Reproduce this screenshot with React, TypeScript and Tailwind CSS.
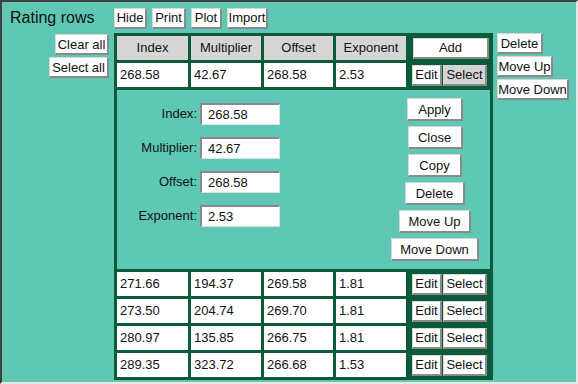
import React from 'react';

const font = { fontFamily: '"Liberation Sans", Arial, sans-serif' };

function Btn({ label, w, h = 'h-[21px]', selected = false }: { label: string; w: string; h?: string; selected?: boolean }) {
  return (
    <button
      className={`${w} ${h} ${selected ? 'bg-[#d4d4d4]' : 'bg-white'} flex items-center justify-center text-[13px] leading-none text-[#111] border-t border-l border-r-2 border-b-2 border-t-[#d6d6d6] border-l-[#d6d6d6] border-r-[#8a8a8a] border-b-[#8a8a8a] shrink-0`}
    >
      {label}
    </button>
  );
}

function Field({ label, value }: { label: string; value: string }) {
  return (
    <div className="flex items-center">
      <span className="w-[83px] text-right pr-[3px] text-[13px] text-[#111]">{label}:</span>
      <input
        readOnly
        value={value}
        className="w-[80px] h-[22px] bg-white pl-[6px] text-[13px] text-[#111] outline-none border-t-2 border-l-2 border-r border-b border-t-[#8a8a8a] border-l-[#8a8a8a] border-r-[#e0e0e0] border-b-[#e0e0e0]"
      />
    </div>
  );
}

const rows = [
  ['271.66', '194.37', '269.58', '1.81'],
  ['273.50', '204.74', '269.70', '1.81'],
  ['280.97', '135.85', '266.75', '1.81'],
  ['289.35', '323.72', '266.68', '1.53'],
];

function DataRow({ r, selected = false }: { r: string[]; selected?: boolean }) {
  return (
    <>
      {r.map((v, i) => (
        <div key={i} className="h-[24px] bg-white flex items-center pl-[3px] text-[13px] text-[#111]">{v}</div>
      ))}
      <div className="h-[24px] flex items-center gap-[1px] pl-[3px]">
        <Btn label="Edit" w="w-[30px]" />
        <Btn label="Select" w="w-[44px]" selected={selected} />
      </div>
    </>
  );
}

export default function App() {
  return (
    <div style={font} className="w-[578px] h-[384px] bg-[#5ec8b5] border-2 border-t-[#404040] border-l-[#404040] border-r-[#e8e8e8] border-b-[#e8e8e8] overflow-hidden">
      <div className="flex items-center pt-[4px]">
        <div className="w-[112px] pl-[8px] text-[16px] text-[#111]">Rating rows</div>
        <div className="flex gap-[5px]">
          <Btn label="Hide" w="w-[33px]" />
          <Btn label="Print" w="w-[34px]" />
          <Btn label="Plot" w="w-[31px]" />
          <Btn label="Import" w="w-[41px]" />
        </div>
      </div>

      <div className="flex mt-[3px]">
        <div className="w-[112px] flex flex-col items-end pr-[5px] pt-[1px] gap-[2px]">
          <Btn label="Clear all" w="w-[54px]" />
          <Btn label="Select all" w="w-[60px]" />
        </div>

        <div className="grid grid-cols-[71px_70px_69px_70px_81px] gap-[3px] p-[3px] bg-[#0b5b3b] w-[379px]">
          {['Index', 'Multiplier', 'Offset', 'Exponent'].map((h) => (
            <div key={h} className="h-[24px] bg-[#d6d6d6] flex items-center justify-center text-[13px] text-[#111]">{h}</div>
          ))}
          <div className="h-[24px] flex items-center pl-[4px]">
            <Btn label="Add" w="w-[76px]" />
          </div>

          <DataRow r={['268.58', '42.67', '268.58', '2.53']} selected />

          <div className="col-span-5 h-[179px] bg-[#5ec8b5] flex">
            <div className="w-[268px] flex flex-col gap-[12px] pt-[13px]">
              <Field label="Index" value="268.58" />
              <Field label="Multiplier" value="42.67" />
              <Field label="Offset" value="268.58" />
              <Field label="Exponent" value="2.53" />
            </div>
            <div className="w-[100px] flex flex-col items-center gap-[5px] pt-[8px]">
              <Btn label="Apply" w="w-[56px]" h="h-[23px]" />
              <Btn label="Close" w="w-[55px]" h="h-[23px]" />
              <Btn label="Copy" w="w-[54px]" h="h-[23px]" />
              <Btn label="Delete" w="w-[60px]" h="h-[23px]" />
              <Btn label="Move Up" w="w-[72px]" h="h-[23px]" />
              <Btn label="Move Down" w="w-[88px]" h="h-[23px]" />
            </div>
          </div>

          {rows.map((r, i) => (
            <DataRow key={i} r={r} />
          ))}
        </div>

        <div className="flex flex-col gap-[2px] ml-[4px]">
          <Btn label="Delete" w="w-[46px]" />
          <Btn label="Move Up" w="w-[56px]" />
          <Btn label="Move Down" w="w-[72px]" />
        </div>
      </div>
    </div>
  );
}
